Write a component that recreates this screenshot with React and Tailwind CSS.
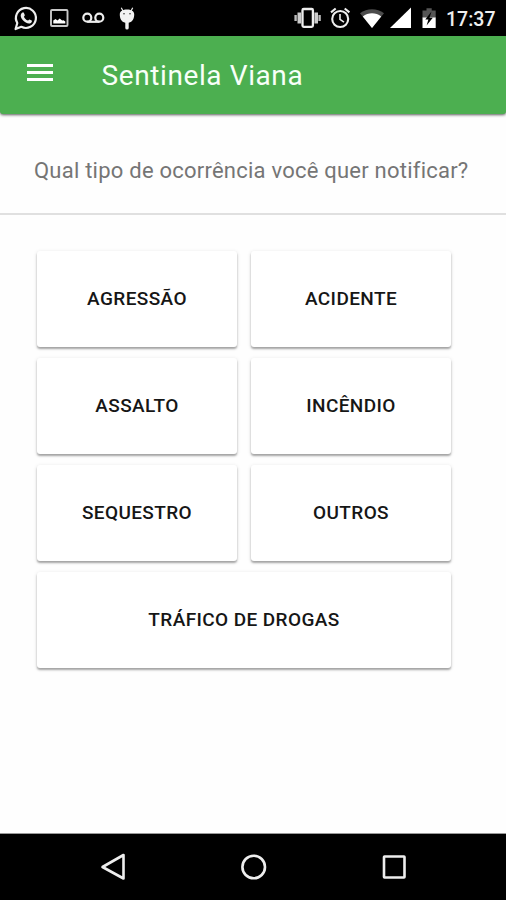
const options = ["AGRESSÃO", "ACIDENTE", "ASSALTO", "INCÊNDIO", "SEQUESTRO", "OUTROS", "TRÁFICO DE DROGAS"];

function NotificationIcons() {
  return (
    <svg className="h-9 w-[140px]" viewBox="0 0 140 36" fill="none" stroke="#eee">
      {/* WhatsApp */}
      <path d="M15.6 29 17.3 23a10 10 0 1 1 4 3.8Z" strokeWidth="2.2" strokeLinejoin="round" />
      <path d="M22.7 12.4c.5-.2.9 0 1.2.6l.9 2c.2.5-.9 1.5-.9 1.8.8 1.9 2.1 3.1 4 3.8.4 0 1.2-1.4 1.7-1.2l2.1 1.1c.8.4-.2 2.6-1.8 2.9-4.7.7-10-5.2-9.1-8.6.3-1.2 1.1-2.1 1.9-2.4Z" fill="#eee" stroke="none" />
      {/* Picture */}
      <rect x="51" y="10" width="16.5" height="16" rx="1" strokeWidth="1.9" stroke="#c8c8c8" />
      <path d="M53.3 23.4v-3l2.2-1.4 2 1.6 2.2-2 2.4 2 1.4-.4 1.8 1.3v1.9Z" fill="#fff" stroke="none" />
      {/* Voicemail */}
      <circle cx="87.3" cy="17.7" r="4" strokeWidth="2.2" />
      <circle cx="99.3" cy="17.7" r="4" strokeWidth="2.2" />
      <path d="M87.3 21.8h12" strokeWidth="2.2" />
      {/* Debugging mascot */}
      <path d="m121.3 7.8 1.8 3.5M132.7 7.8l-1.8 3.5" strokeWidth="1.2" />
      <path d="M119.8 14c.2-3 3-4.6 7.2-4.6s7 1.6 7.2 4.6c.2 4.2-1.6 8-5.5 8.8v5.1a1.7 1.7 0 0 1-3.4 0v-5.1c-3.9-.8-5.7-4.6-5.5-8.8Z" fill="#f2f2f2" stroke="none" />
      <circle cx="124" cy="13.8" r=".8" fill="#333" stroke="none" />
      <circle cx="130" cy="13.8" r=".8" fill="#333" stroke="none" />
    </svg>
  );
}

function SystemIcons() {
  return (
    <svg className="h-9 w-[150px]" viewBox="290 0 150 36" fill="none" stroke="#eee">
      {/* Vibrate */}
      <rect x="302.5" y="9" width="10.4" height="17.8" rx="1.2" strokeWidth="2.3" />
      <path d="M299.3 12.5v11M316.2 12.5v11" strokeWidth="3.6" stroke="#ccc" />
      <path d="M295.6 15v6M319.6 15v6" strokeWidth="2.4" stroke="#bbb" />
      {/* Alarm */}
      <circle cx="340.2" cy="19" r="8" strokeWidth="2.1" />
      <path d="m331 12.4 4.7-3.9M349.4 12.4l-4.7-3.9" strokeWidth="2.1" />
      <path d="M340 14v5.4l4 2.7" strokeWidth="1.6" />
      {/* Wi-Fi */}
      <path d="M360 13.2c7-5.4 17-5.4 24 0L372 28Z" fill="#4c4c4c" stroke="none" />
      <path d="M362.8 16.5c5.4-4.3 13-4.3 18.4 0L372 28Z" fill="#fff" stroke="none" />
      {/* Signal */}
      <path d="M390 28 411 7.5V28Z" fill="#fff" stroke="none" />
      {/* Battery */}
      <path d="M422.5 10.4h4V8.2h5.2v2.2h4V18h-13.2Z" fill="#555" stroke="none" />
      <path d="M422.5 17.5h13.2V28h-13.2Z" fill="#fff" stroke="none" />
      <path d="m431.5 11.5-6.2 8h3.1l-1.8 6 6.2-7.8h-3.3Z" fill="#000" stroke="none" />
    </svg>
  );
}

export default function App() {
  return (
    <div className="flex h-[900px] w-[506px] flex-col overflow-hidden bg-[#fefefe] font-['Roboto',sans-serif]">
      <div className="flex h-9 shrink-0 items-center bg-black">
        <NotificationIcons />
        <div className="ml-auto flex items-center">
          <SystemIcons />
          <span className="w-[66px] pt-[3px] pl-[6px] text-[19.5px] leading-none font-medium whitespace-nowrap text-[#eee]">17:37</span>
        </div>
      </div>

      <header className="flex h-[78px] shrink-0 items-center rounded-b-[3px] bg-[#4caf50] shadow-[0_1px_3px_rgba(0,0,0,0.65)]">
        <button className="ml-[27px] flex w-[26px] flex-col gap-[4px] pb-[6px]" aria-label="Menu">
          <span className="h-[3px] bg-white" />
          <span className="h-[3px] bg-white" />
          <span className="h-[3px] bg-white" />
        </button>
        <h1 className="ml-[48.5px] pt-[2px] text-[28px] leading-none tracking-[0.6px] text-[#f8fff8]">Sentinela Viana</h1>
      </header>

      <div className="flex h-[101px] shrink-0 items-center border-b-2 border-[#e0e0e0] pt-[14px] pl-[34px]">
        <p className="text-[22px] leading-none tracking-[0.23px] whitespace-nowrap text-[#757575]">Qual tipo de ocorrência você quer notificar?</p>
      </div>

      <main className="grid w-[451px] grid-cols-2 gap-x-[14px] gap-y-[11px] pt-[36px] pl-[37px]">
        {options.map((label) => (
          <button
            key={label}
            className="flex h-24 items-center justify-center rounded-[3px] bg-white text-[19px] font-medium tracking-[0.4px] text-[#161616] shadow-[0_2px_2px_rgba(0,0,0,0.3),0_1px_4px_rgba(0,0,0,0.12)] last:col-span-2"
          >
            {label}
          </button>
        ))}
      </main>

      <nav className="mt-auto h-[67px] shrink-0 border-t border-[#999] bg-black">
        <svg className="h-[66px] w-full" viewBox="0 834 506 66" fill="none" stroke="#eee" strokeWidth="2.6" strokeLinejoin="round">
          <path d="M102.5 867 123.5 855v23.5Z" />
          <circle cx="253.7" cy="867" r="11.3" />
          <rect x="384" y="856.5" width="20.5" height="21" rx=".5" />
        </svg>
      </nav>
    </div>
  );
}
